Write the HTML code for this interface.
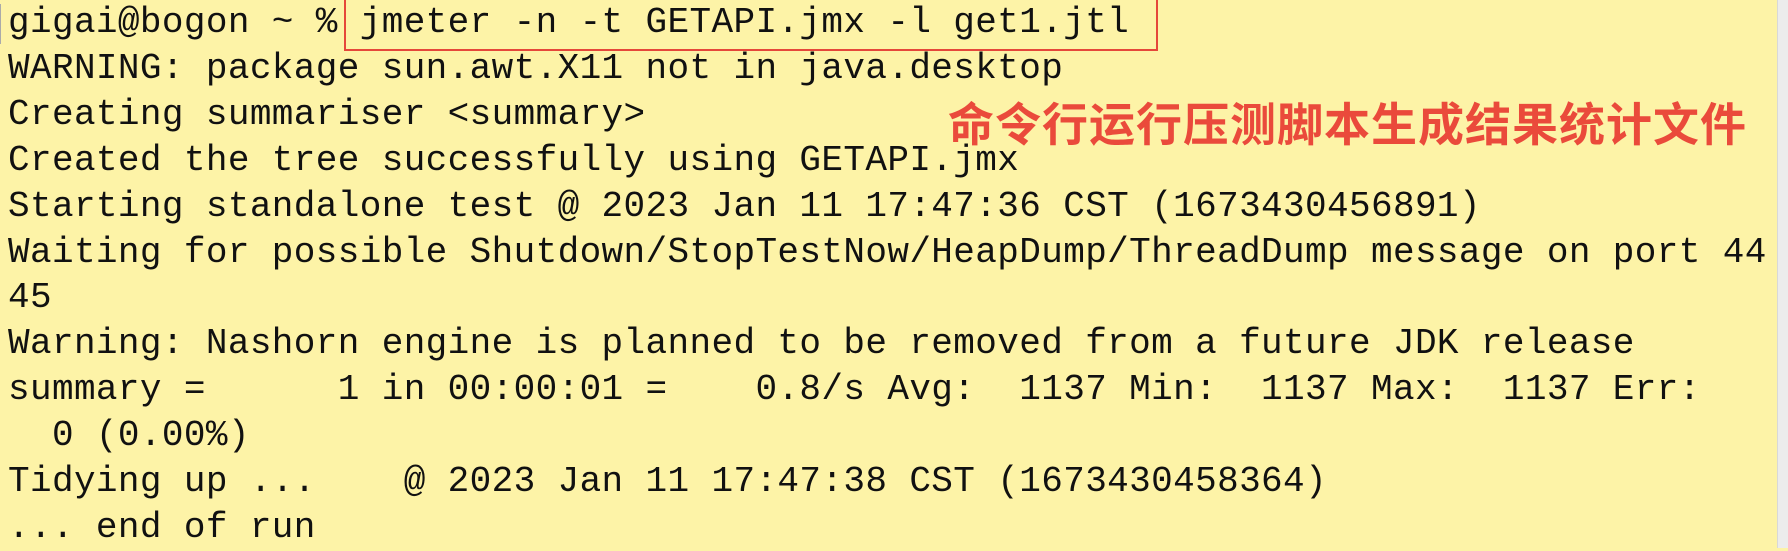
<!DOCTYPE html>
<html><head><meta charset="utf-8"><style>
html,body{margin:0;padding:0;}
body{width:1788px;height:548px;background:#fdf3a7;position:relative;overflow:hidden;}
pre{margin:0;position:absolute;left:8px;top:0;font-family:"Liberation Mono",monospace;font-size:36px;line-height:45.9px;color:#111;letter-spacing:0.38px;}
.box{position:absolute;left:344px;top:-3px;width:814px;height:54px;border:2.5px solid #e5473a;box-sizing:border-box;}
.zh{position:absolute;left:948px;top:89px;font-family:"Liberation Sans","Noto Sans CJK SC",sans-serif;font-weight:bold;font-size:46px;color:#ea4a3b;letter-spacing:1px;white-space:nowrap;}
.bar{position:absolute;right:0;top:0;width:10px;height:548px;background:#ececec;border-left:1px solid #d8d8d8;}
.lb{position:absolute;left:0;top:4px;width:3px;height:40px;border-left:1px solid #aaa;}
</style></head><body>
<div class="bar"></div>
<div class="lb"></div>
<pre>gigai@bogon ~ % jmeter -n -t GETAPI.jmx -l get1.jtl
WARNING: package sun.awt.X11 not in java.desktop
Creating summariser &lt;summary&gt;
Created the tree successfully using GETAPI.jmx
Starting standalone test @ 2023 Jan 11 17:47:36 CST (1673430456891)
Waiting for possible Shutdown/StopTestNow/HeapDump/ThreadDump message on port 44
45
Warning: Nashorn engine is planned to be removed from a future JDK release
summary =      1 in 00:00:01 =    0.8/s Avg:  1137 Min:  1137 Max:  1137 Err:
  0 (0.00%)
Tidying up ...    @ 2023 Jan 11 17:47:38 CST (1673430458364)
... end of run</pre>
<div class="box"></div>
<div class="zh">命令行运行压测脚本生成结果统计文件</div>
</body></html>
